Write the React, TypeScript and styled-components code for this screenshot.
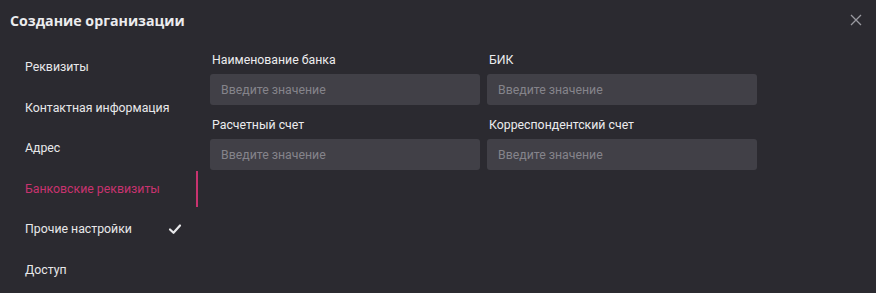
import React from "react";
import styled, { createGlobalStyle } from "styled-components";

const Global = createGlobalStyle`
  html, body { margin: 0; padding: 0; background: #2b2a30; }
  body { font-family: Roboto, "Noto Sans", sans-serif; }
  * { box-sizing: border-box; }
`;

const Dialog = styled.div`
  width: 876px;
  height: 293px;
  background: #2b2a30;
  color: #e6e6e8;
  display: flex;
  flex-direction: column;
  overflow: hidden;
`;

const Header = styled.div`
  height: 40px;
  display: flex;
  align-items: center;
  justify-content: space-between;
  padding: 0 10px 0 10px;
`;

const Title = styled.h1`
  margin: 0;
  font-family: "Open Sans", sans-serif;
  font-size: 14.2px;
  font-weight: 700;
  color: #ececee;
`;

const Close = styled.button`
  width: 20px;
  height: 20px;
  border: 0;
  background: none;
  padding: 0;
  display: flex;
  align-items: center;
  justify-content: center;
  cursor: pointer;
`;

const Body = styled.div`
  display: flex;
  gap: 10px;
  padding-top: 9px;
`;

const Sidebar = styled.nav`
  width: 200px;
  display: flex;
  flex-direction: column;
  gap: 4.6px;
`;

const NavItem = styled.div<{ $active?: boolean }>`
  height: 36px;
  display: flex;
  align-items: center;
  justify-content: space-between;
  padding: 0 14px 0 25px;
  font-size: 12.3px;
  color: ${(p) => (p.$active ? "#c8336f" : "#e8e8ea")};
  border-right: 2px solid ${(p) => (p.$active ? "#c8336f" : "transparent")};
  margin-right: 2px;
`;

const Content = styled.div`
  display: grid;
  grid-template-columns: 270px 270px;
  column-gap: 7px;
  row-gap: 10px;
  align-content: start;
  padding-top: 1px;
`;

const Field = styled.label`
  display: flex;
  flex-direction: column;
  gap: 5px;
`;

const Label = styled.span`
  font-size: 12.3px;
  line-height: 18px;
  margin-top: 1px;
  color: #ececee;
  padding-left: 2px;
`;

const Input = styled.input`
  height: 31px;
  border: 0;
  border-radius: 3px;
  background: #414047;
  padding: 0 11px;
  font-family: inherit;
  font-size: 12.3px;
  color: #ddd;
  outline: none;
  &::placeholder { color: #85848b; }
`;

const Check = () => (
  <svg width="14" height="12" viewBox="0 0 14 12">
    <path d="M2 6.5 L5.5 9.8 L12 2.5" fill="none" stroke="#e8e8ea" strokeWidth="2.2" strokeLinecap="round" strokeLinejoin="round" />
  </svg>
);

const items = [
  { t: "Реквизиты" },
  { t: "Контактная информация" },
  { t: "Адрес" },
  { t: "Банковские реквизиты", active: true },
  { t: "Прочие настройки", done: true },
  { t: "Доступ" },
];

const fields = ["Наименование банка", "БИК", "Расчетный счет", "Корреспондентский счет"];

export default function App() {
  return (
    <>
      <Global />
      <Dialog>
        <Header>
          <Title>Создание организации</Title>
          <Close aria-label="close">
            <svg width="12" height="12" viewBox="0 0 12 12">
              <path d="M1 1 L11 11 M11 1 L1 11" stroke="#9a99a0" strokeWidth="1.3" />
            </svg>
          </Close>
        </Header>
        <Body>
          <Sidebar>
            {items.map((i) => (
              <NavItem key={i.t} $active={i.active}>
                <span>{i.t}</span>
                {i.done && <Check />}
              </NavItem>
            ))}
          </Sidebar>
          <Content>
            {fields.map((f) => (
              <Field key={f}>
                <Label>{f}</Label>
                <Input placeholder="Введите значение" />
              </Field>
            ))}
          </Content>
        </Body>
      </Dialog>
    </>
  );
}
